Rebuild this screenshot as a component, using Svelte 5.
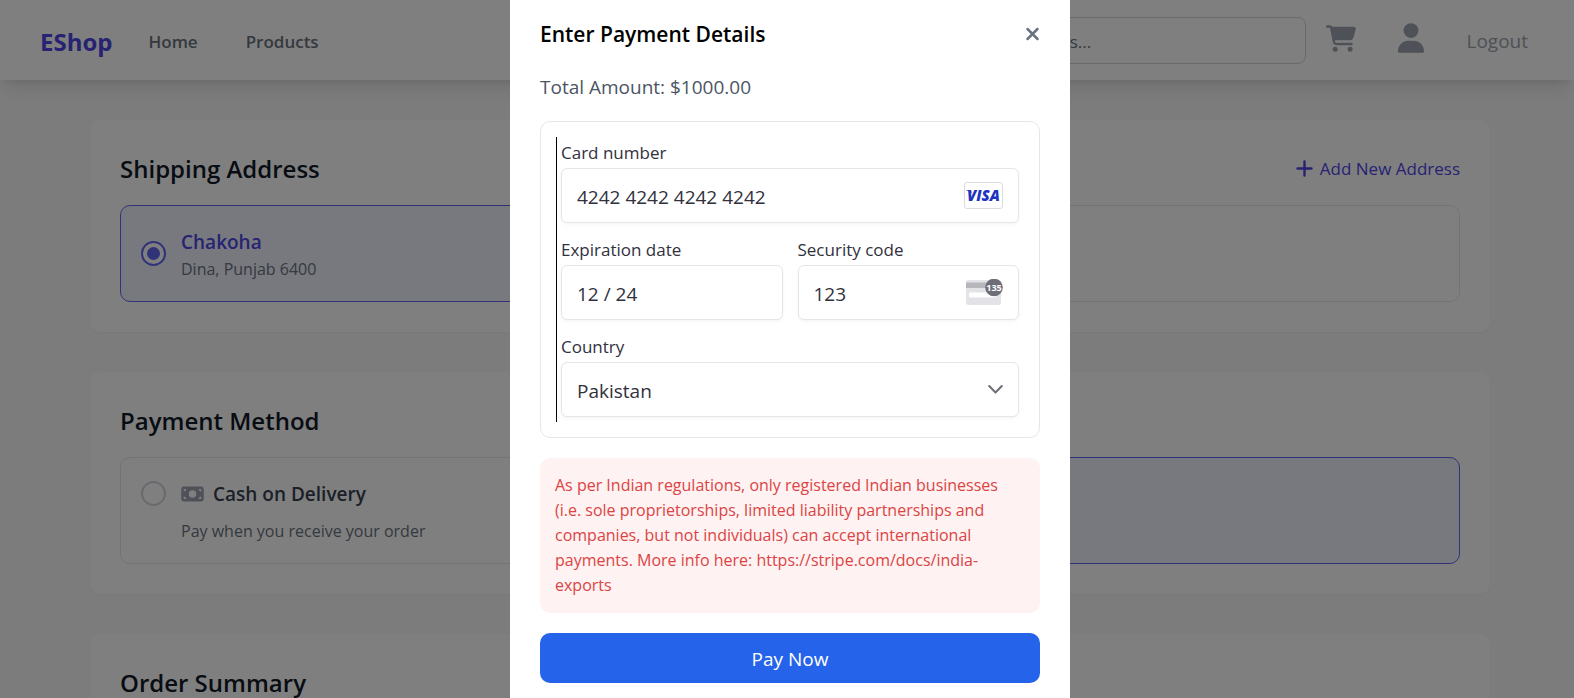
<script>
  let address = $state('chakoha');
  let method = $state('');
  let card = $state('4242 4242 4242 4242');
  let expiry = $state('12 / 24');
  let code = $state('123');
  let country = $state('Pakistan');
</script>

<div class="page">
  <header class="navbar">
    <div class="brand">
      <a class="logo" href="#home">EShop</a>
      <nav class="links">
        <a href="#home">Home</a>
        <a href="#products">Products</a>
      </nav>
    </div>
    <input class="search" type="search" placeholder="Search for products..." aria-label="Search" />
    <div class="actions">
      <a href="#cart" aria-label="Cart">
        <svg width="30" height="27" viewBox="0 0 576 512" fill="currentColor"><path d="M0 24C0 10.700 10.700 0 24 0L69.500 0c22 0 41.500 12.800 50.600 32l411 0c26.300 0 45.500 25 38.600 50.400l-41 152.300c-8.500 31.400-37 53.300-69.500 53.300l-288.500 0 5.400 28.500c2.200 11.300 12.100 19.500 23.600 19.500L488 336c13.300 0 24 10.700 24 24s-10.700 24-24 24l-288.300 0c-34.600 0-64.300-24.600-70.700-58.500L77.400 54.500c-.7-3.800-4-6.500-7.900-6.500L24 48C10.700 48 0 37.300 0 24zM128 464a48 48 0 1 1 96 0 48 48 0 1 1 -96 0zm336-48a48 48 0 1 1 0 96 48 48 0 1 1 0-96z" /></svg>
      </a>
      <a href="#account" aria-label="Account">
        <svg width="26" height="30" viewBox="0 0 448 512" fill="currentColor"><path d="M224 256A128 128 0 1 0 224 0a128 128 0 1 0 0 256zm-45.700 48C79.800 304 0 383.800 0 482.300C0 498.700 13.300 512 29.700 512l388.600 0c16.400 0 29.700-13.300 29.700-29.700C448 383.800 368.200 304 269.700 304l-91.400 0z" /></svg>
      </a>
      <button class="logout" type="button">Logout</button>
    </div>
  </header>

  <main>
    <section class="panel">
      <div class="panel-head">
        <h2>Shipping Address</h2>
        <button class="add" type="button">
          <svg width="17" height="17" viewBox="0 0 17 17" fill="none" stroke="currentColor" stroke-width="2.400" stroke-linecap="round"><path d="M8.500 1.500v14M1.500 8.500h14" /></svg>
          Add New Address
        </button>
      </div>
      <div class="options">
        <label class="option center selected">
          <input type="radio" name="address" value="chakoha" bind:group={address} />
          <span class="lines">
            <span class="name">Chakoha</span>
            <span class="note">Dina, Punjab 6400</span>
          </span>
        </label>
        <div class="option"></div>
      </div>
    </section>

    <section class="panel">
      <div class="panel-head"><h2>Payment Method</h2></div>
      <div class="options">
        <label class="option">
          <input type="radio" name="method" value="cash" bind:group={method} />
          <span class="lines spaced">
            <span class="name">
              <svg width="23" height="20" viewBox="0 0 576 512" fill="currentColor"><path d="M64 64C28.700 64 0 92.700 0 128L0 384c0 35.300 28.700 64 64 64l448 0c35.300 0 64-28.700 64-64l0-256c0-35.300-28.700-64-64-64L64 64zm64 320l-64 0 0-64c35.300 0 64 28.700 64 64zM64 192l0-64 64 0c0 35.300-28.700 64-64 64zM448 384c0-35.300 28.700-64 64-64l0 64-64 0zm64-192c-35.300 0-64-28.700-64-64l64 0 0 64zM288 160a96 96 0 1 1 0 192 96 96 0 1 1 0-192z" /></svg>
              Cash on Delivery
            </span>
            <span class="note">Pay when you receive your order</span>
          </span>
        </label>
        <div class="option selected"></div>
      </div>
    </section>

    <section class="panel">
      <div class="panel-head"><h2>Order Summary</h2></div>
    </section>
  </main>
</div>

<div class="overlay">
  <div class="modal" role="dialog" aria-modal="true" aria-labelledby="modal-title">
    <div class="modal-head">
      <h3 id="modal-title">Enter Payment Details</h3>
      <button class="close" type="button" aria-label="Close">
        <svg width="15" height="20" viewBox="0 0 15 20" fill="none" stroke="currentColor" stroke-width="2.500" stroke-linecap="round"><path d="M2.500 5l10 10M12.500 5l-10 10" /></svg>
      </button>
    </div>
    <p class="total">Total Amount: $1000.00</p>

    <form onsubmit={(e) => e.preventDefault()}>
      <div class="element">
        <div class="fields">
          <div class="field wide">
            <label for="card">Card number</label>
            <div class="control">
              <input id="card" type="text" inputmode="numeric" bind:value={card} />
              <svg class="mark" width="39" height="27" viewBox="0 0 39 27" role="img" aria-label="Visa">
                <rect x="0.500" y="0.500" width="38" height="26" rx="2.500" fill="#fff" stroke="#dcdce0" />
                <path d="M2 8.300h5l1 3.200C6.800 10 4.800 9 2 8.600z" fill="#1e34c0" />
                <text x="3" y="19" class="visa">VISA</text>
              </svg>
            </div>
          </div>
          <div class="field">
            <label for="expiry">Expiration date</label>
            <div class="control">
              <input id="expiry" type="text" inputmode="numeric" bind:value={expiry} />
            </div>
          </div>
          <div class="field">
            <label for="code">Security code</label>
            <div class="control">
              <input id="code" type="text" inputmode="numeric" bind:value={code} />
              <svg class="mark" width="39" height="27" viewBox="0 0 39 27" aria-hidden="true">
                <rect x="2" y="1" width="35" height="25" rx="2.500" fill="#e3e3e7" />
                <rect x="2" y="3.500" width="35" height="5.500" fill="#b6b6bc" />
                <rect x="5" y="13.500" width="27" height="5" rx="1" fill="#fff" />
                <circle cx="30" cy="8.500" r="8.800" fill="#6d6e78" />
                <text x="30" y="12" class="digits">135</text>
              </svg>
            </div>
          </div>
          <div class="field wide">
            <label for="country">Country</label>
            <div class="control">
              <select id="country" bind:value={country}>
                <option>Pakistan</option>
              </select>
              <svg class="mark" width="15" height="10" viewBox="0 0 15 10" fill="none" stroke="#6d6e78" stroke-width="2" stroke-linecap="round" stroke-linejoin="round" aria-hidden="true"><path d="M1.200 2l6.300 6.500 6.300-6.500" /></svg>
            </div>
          </div>
        </div>
      </div>

      <p class="error" role="alert">
        As per Indian regulations, only registered Indian businesses (i.e. sole proprietorships, limited
        liability partnerships and companies, but not individuals) can accept international payments. More
        info here: https://stripe.com/docs/india-exports
      </p>
      <button class="pay" type="submit">Pay Now</button>
    </form>
  </div>
</div>

<style>
  :global(body) {
    overflow: hidden;
    background: #f9f9fa;
    font-family: 'Open Sans', 'Noto Sans', sans-serif;
    color: #000;
  }
  .page *, .overlay, .overlay * {
    box-sizing: border-box;
  }
  h2, h3, p {
    margin: 0;
  }
  a {
    color: inherit;
    text-decoration: none;
  }
  button, input, select {
    font: inherit;
    color: inherit;
  }
  button {
    padding: 0;
    border: 0;
    background: none;
    cursor: pointer;
  }
  svg {
    display: block;
    flex: none;
  }

  .navbar {
    position: relative;
    display: flex;
    align-items: center;
    height: 80px;
    padding: 0 46px 0 40px;
    background: #fff;
    box-shadow: 0 12px 19px -4px rgb(0 0 0 / 10%), 0 5px 8px -5px rgb(0 0 0 / 10%);
  }
  .brand {
    display: flex;
    align-items: center;
    gap: 36px;
    padding-top: 4px;
  }
  .logo {
    color: #4f46e5;
    font-size: 24px;
    line-height: 40px;
    font-weight: 700;
  }
  .links {
    display: flex;
    gap: 48px;
    color: #6b7280;
    font-size: 17px;
    line-height: 30px;
    font-weight: 600;
  }
  .search {
    width: 405px;
    height: 47px;
    margin-left: auto;
    padding: 2px 19px 0;
    border: 1px solid #d1d5db;
    border-radius: 8px;
    background: #fff;
    font-size: 17px;
  }
  .search::placeholder {
    color: #6b7280;
    opacity: 1;
  }
  .actions {
    display: flex;
    align-items: center;
    gap: 42px;
    margin-left: 20px;
    color: #9ca3af;
  }
  .actions a {
    padding-bottom: 4px;
  }
  .logout {
    padding-top: 2px;
    font-size: 19px;
    line-height: 30px;
  }

  main {
    display: flex;
    flex-direction: column;
    align-items: center;
    gap: 40px;
    padding: 40px 40px 40px 46px;
  }
  .panel {
    width: 100%;
    max-width: 1400px;
    padding: 30px;
    border-radius: 10px;
    background: #fff;
    box-shadow: 0 1px 3px rgb(0 0 0 / 4%);
  }
  .panel-head {
    display: flex;
    align-items: center;
    justify-content: space-between;
    margin-bottom: 18px;
  }
  h2 {
    color: #111827;
    font-size: 24px;
    line-height: 37px;
    font-weight: 600;
  }
  .add {
    display: flex;
    align-items: center;
    gap: 7px;
    color: #4f46e5;
    font-size: 17px;
    line-height: 25px;
  }
  .options {
    display: grid;
    grid-template-columns: 1fr 1fr;
    gap: 20px;
  }
  .option {
    display: flex;
    align-items: flex-start;
    gap: 15px;
    padding: 20px;
    border: 1px solid #e5e7eb;
    border-radius: 10px;
  }
  .option.center {
    align-items: center;
  }
  .option.selected {
    border-color: #6366f1;
    background: #eef2ff;
  }
  .option input {
    appearance: none;
    display: grid;
    place-items: center;
    flex: none;
    width: 25px;
    height: 25px;
    margin: 3px 0;
    border: 2px solid #d1d5db;
    border-radius: 50%;
    background: #fff;
  }
  .option input:checked {
    border-color: #6366f1;
  }
  .option input:checked::before {
    content: '';
    width: 13px;
    height: 13px;
    border-radius: 50%;
    background: #6366f1;
  }
  .lines {
    display: flex;
    flex-direction: column;
  }
  .spaced {
    gap: 10px;
  }
  .name {
    display: flex;
    align-items: center;
    gap: 9px;
    color: #374151;
    font-size: 19px;
    line-height: 32px;
    font-weight: 600;
  }
  .name svg {
    color: #9ca3af;
  }
  .selected .name {
    color: #4f46e5;
  }
  .note {
    color: #6b7280;
    font-size: 16px;
    line-height: 23px;
  }

  .overlay {
    position: fixed;
    inset: 0;
    display: flex;
    align-items: center;
    justify-content: center;
    padding-left: 6px;
    background: rgb(0 0 0 / 50%);
  }
  .modal {
    flex: none;
    width: 100%;
    max-width: 560px;
    padding: 30px;
    background: #fff;
  }
  .modal-head {
    display: flex;
    align-items: center;
    justify-content: space-between;
    margin-bottom: 18px;
  }
  h3 {
    font-size: 21px;
    line-height: 37px;
    font-weight: 600;
  }
  .close {
    color: #6b7280;
  }
  .total {
    margin-bottom: 18px;
    color: #4b5563;
    font-size: 19px;
    line-height: 32px;
  }
  .element {
    padding: 15px;
    border: 1px solid #e5e7eb;
    border-radius: 10px;
  }
  .fields {
    display: grid;
    grid-template-columns: 1fr 1fr;
    gap: 15px;
    padding: 4px 5px 5px 4px;
    border-left: 1px solid #000;
  }
  .wide {
    grid-column: 1 / -1;
  }
  .field label {
    display: block;
    margin-bottom: 3px;
    color: #30313d;
    font-size: 17px;
    line-height: 24px;
  }
  .control {
    display: grid;
    align-items: center;
  }
  .control > * {
    grid-area: 1 / 1;
  }
  .control input, .control select {
    appearance: none;
    width: 100%;
    height: 55px;
    padding: 3px 15px 0;
    border: 1px solid #e6e6e6;
    border-radius: 6px;
    background: #fff;
    box-shadow: 0 1px 2px rgb(0 0 0 / 3%), 0 3px 6px rgb(0 0 0 / 2%);
    color: #30313d;
    font-size: 19px;
  }
  .mark {
    justify-self: end;
    margin-right: 16px;
    pointer-events: none;
  }
  .visa {
    fill: #1e34c0;
    font: italic 800 15px 'Open Sans', sans-serif;
  }
  .digits {
    fill: #fff;
    font: 700 9px 'Open Sans', sans-serif;
    text-anchor: middle;
  }
  .error {
    margin: 20px 0;
    padding: 15px;
    border-radius: 10px;
    background: #fef2f2;
    color: #dc4444;
    font-size: 16px;
    line-height: 25px;
  }
  .pay {
    display: block;
    width: 100%;
    height: 50px;
    padding-top: 2px;
    border-radius: 10px;
    background: #2563eb;
    color: #fff;
    font-size: 19px;
  }
</style>
